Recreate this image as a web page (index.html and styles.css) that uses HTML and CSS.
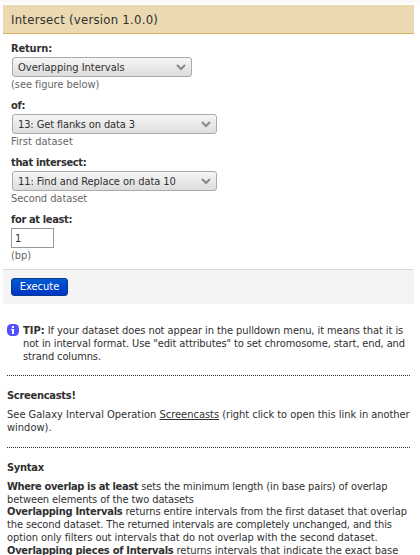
FILE: index.html
```html
<!DOCTYPE html>
<html lang="en">
<head>
<meta charset="utf-8">
<title>Intersect</title>
<link rel="stylesheet" href="styles.css">
</head>
<body>
<form class="tool-form">
  <h1 class="tool-title">Intersect (version 1.0.0)</h1>
  <div class="tool-body">
    <div class="row">
      <div class="label label-wide">Return:</div>
      <div class="select select-narrow"><span>Overlapping Intervals</span><svg class="chevron" viewBox="0 0 10 7"><path d="M1 1l4 4 4-4"/></svg></div>
      <div class="help">(see figure below)</div>
    </div>
    <div class="row">
      <div class="label">of:</div>
      <div class="select"><span class="tight">13: Get flanks on data 3</span><svg class="chevron" viewBox="0 0 10 7"><path d="M1 1l4 4 4-4"/></svg></div>
      <div class="help help-wide">First dataset</div>
    </div>
    <div class="row">
      <div class="label">that intersect:</div>
      <div class="select"><span class="snug">11: Find and Replace on data 10</span><svg class="chevron" viewBox="0 0 10 7"><path d="M1 1l4 4 4-4"/></svg></div>
      <div class="help">Second dataset</div>
    </div>
    <div class="row">
      <div class="label">for at least:</div>
      <div class="field">1</div>
      <div class="help">(bp)</div>
    </div>
  </div>
  <div class="actions"><button type="button" class="execute">Execute</button></div>
</form>
<div class="docs">
  <div class="tip">
    <svg class="info" viewBox="0 0 12 12"><rect width="12" height="12" rx="4.5"/><path d="M5 2h2v2H5zM4 5h3v5H5V6H4z"/></svg>
    <p class="tight"><b class="tip-word">TIP:</b> <span class="snug">If your dataset does not appear in the pulldown menu, it means that it is</span><br>not in interval format. Use "edit attributes" to set chromosome, start, end, and<br>strand columns.</p>
  </div>
  <hr>
  <h2>Screencasts!</h2>
  <p class="casts">See Galaxy Interval Operation <a>Screencasts</a> <span class="near">(right click to open this link in another</span><br>window).</p>
  <hr>
  <h2>Syntax</h2>
  <p class="syntax"><b class="where">Where overlap is at least</b> <span class="tight">sets the minimum length (in base pairs) of overlap</span><br><span class="tight">between elements of the two datasets</span><br><b>Overlapping Intervals</b> <span class="snug">returns entire intervals from the first dataset that overlap</span><br><span class="tight">the second dataset. The returned intervals are completely unchanged, and this</span><br><span class="snug">option only filters out intervals that do not overlap with the second dataset.</span><br><b>Overlapping pieces of Intervals</b> <span class="near">returns intervals that indicate the exact base</span></p>
</div>
</body>
</html>
```
FILE: styles.css
```css
* { box-sizing: border-box; }
html { height: 555px; overflow: hidden; }
body {
  margin: 0;
  height: 555px;
  overflow: hidden;
  padding-top: 5px;
  background: linear-gradient(#f8f8f8, #fff 5px);
  font: 11px/13px "DejaVu Sans Condensed", "DejaVu Sans", sans-serif;
  font-stretch: condensed;
  color: #303030;
  white-space: nowrap;
}
h1, h2, p { margin: 0; }
b { letter-spacing: -0.27px; }
.tight { letter-spacing: -0.11px; }
.snug { letter-spacing: -0.07px; }
.near { letter-spacing: -0.045px; }
.where { letter-spacing: -0.36px; }
.tip-word { letter-spacing: 0; }
.tool-form { width: 411px; margin-left: 3px; }
.tool-title {
  height: 29px;
  padding: 0 8px;
  border-bottom: 1px solid #d8b365;
  background: #ebd9b2;
  font-size: 13px;
  font-weight: normal;
  letter-spacing: 0.25px;
  line-height: 29px;
}
.tool-body { height: 235px; padding: 8px 8px 0; }
.row { height: 57px; }
.label { height: 14px; font-weight: bold; letter-spacing: -0.35px; }
.label-wide { letter-spacing: -0.15px; }
.select {
  display: flex;
  align-items: center;
  justify-content: space-between;
  width: 205px;
  height: 20px;
  margin: 1px 0 0 1px;
  padding: 0 5px;
  border: 1px solid #aaa;
  border-radius: 3px;
  background: linear-gradient(#f6f6f6, #ddd);
}
.select-narrow { width: 180px; }
.chevron { width: 10px; height: 7px; fill: none; stroke: #888; stroke-width: 2; }
.help { height: 13px; margin-top: 1px; color: #666; letter-spacing: -0.06px; }
.help-wide { letter-spacing: 0.04px; }
.field {
  width: 43px;
  height: 20px;
  margin-top: 1px;
  padding: 0 3px;
  border: 1px solid #999;
  background: #fff;
  line-height: 20px;
}
.actions {
  height: 35px;
  padding: 8px;
  border-top: 1px solid #d8d8d8;
  background: #f4f4f4;
}
.execute {
  display: block;
  width: 57px;
  height: 18px;
  padding: 0;
  border: 1px solid #0a3a8c;
  border-radius: 3px;
  background: linear-gradient(#0059d0, #0036c4);
  color: #fff;
  font: inherit;
  line-height: 14px;
}
.docs { width: 403px; margin: 20px 0 0 7px; }
.tip { display: flex; height: 51px; }
.info { flex: none; width: 12px; height: 12px; margin-right: 4px; fill: #5050ff; }
.info path { fill: #fff; }
hr { height: 1px; margin: 0; border: 0; border-top: 1px dotted #303030; }
h2 { margin-top: 13px; font-size: 11px; line-height: 13px; letter-spacing: -0.27px; }
a { color: #303030; text-decoration: underline; }
.casts { height: 39px; margin-top: 6px; }
.syntax { margin-top: 7px; line-height: 12.7px; }
```
